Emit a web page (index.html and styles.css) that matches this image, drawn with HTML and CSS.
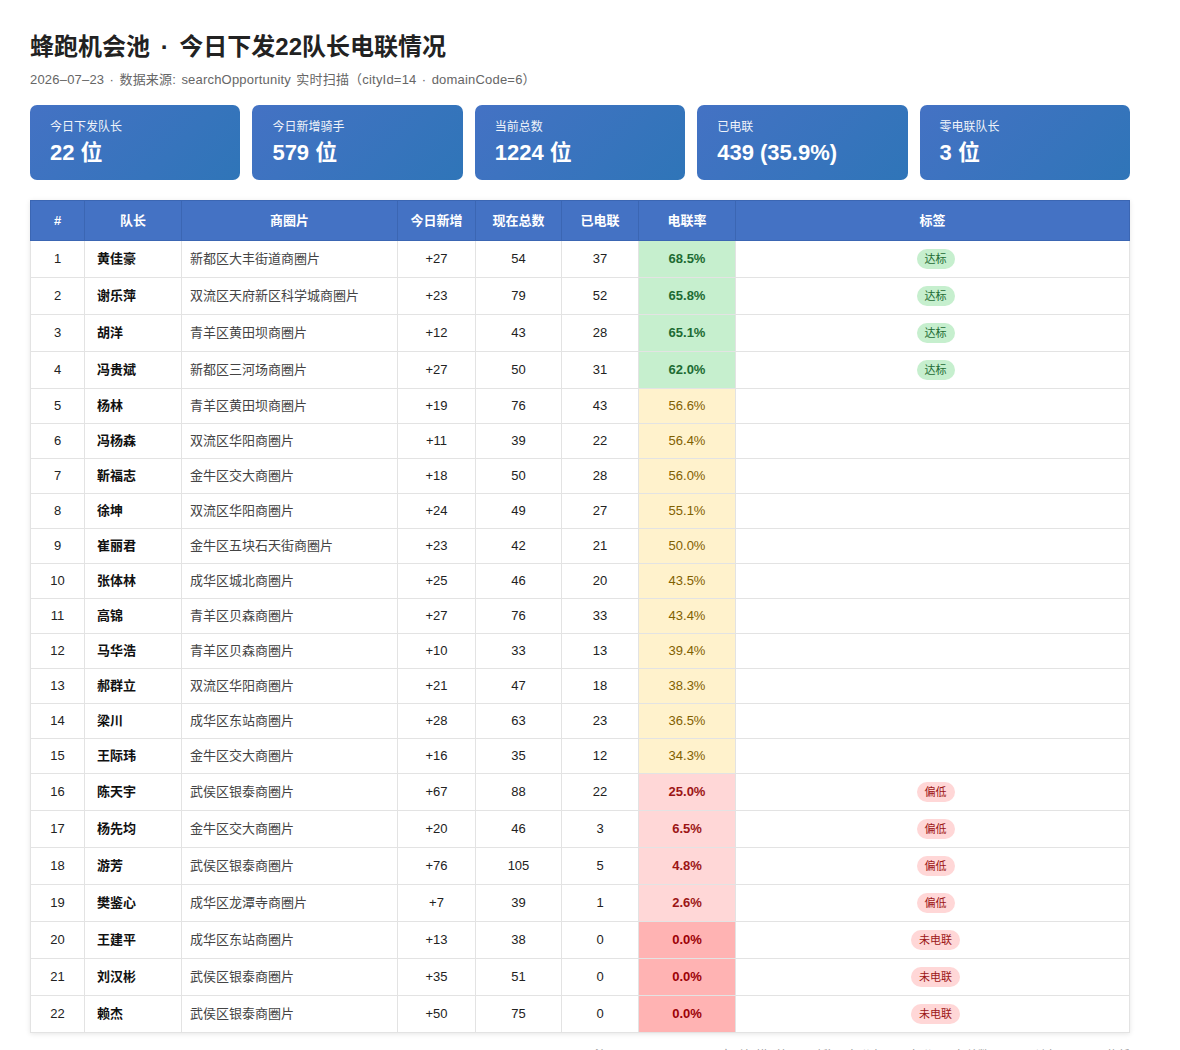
FILE: index.html
```html
<!DOCTYPE html>
<html lang="zh-CN">
<head>
<meta charset="utf-8">
<title>蜂跑机会池 · 今日下发22队长电联情况</title>
<link rel="stylesheet" href="styles.css">
</head>
<body>
<div class="page">
  <h1 class="title">蜂跑机会池 · 今日下发22队长电联情况</h1>
  <p class="subtitle">2026–07–23 · 数据来源: searchOpportunity 实时扫描（cityId=14 · domainCode=6）</p>

  <div class="cards">
    <div class="card"><div class="card-label">今日下发队长</div><div class="card-value">22 位</div></div>
    <div class="card"><div class="card-label">今日新增骑手</div><div class="card-value">579 位</div></div>
    <div class="card"><div class="card-label">当前总数</div><div class="card-value">1224 位</div></div>
    <div class="card"><div class="card-label">已电联</div><div class="card-value">439 (35.9%)</div></div>
    <div class="card"><div class="card-label">零电联队长</div><div class="card-value">3 位</div></div>
  </div>

  <table class="grid">
    <colgroup>
      <col class="c-idx"><col class="c-name"><col class="c-area"><col class="c-new"><col class="c-total"><col class="c-called"><col class="c-rate"><col class="c-tag">
    </colgroup>
    <thead>
      <tr><th>#</th><th>队长</th><th>商圈片</th><th>今日新增</th><th>现在总数</th><th>已电联</th><th>电联率</th><th>标签</th></tr>
    </thead>
    <tbody>
      <tr><td class="idx">1</td><td class="name">黄佳豪</td><td class="area">新都区大丰街道商圈片</td><td class="num">+27</td><td class="num">54</td><td class="num">37</td><td class="rate good">68.5%</td><td class="tag"><span class="badge ok">达标</span></td></tr>
      <tr><td class="idx">2</td><td class="name">谢乐萍</td><td class="area">双流区天府新区科学城商圈片</td><td class="num">+23</td><td class="num">79</td><td class="num">52</td><td class="rate good">65.8%</td><td class="tag"><span class="badge ok">达标</span></td></tr>
      <tr><td class="idx">3</td><td class="name">胡洋</td><td class="area">青羊区黄田坝商圈片</td><td class="num">+12</td><td class="num">43</td><td class="num">28</td><td class="rate good">65.1%</td><td class="tag"><span class="badge ok">达标</span></td></tr>
      <tr><td class="idx">4</td><td class="name">冯贵斌</td><td class="area">新都区三河场商圈片</td><td class="num">+27</td><td class="num">50</td><td class="num">31</td><td class="rate good">62.0%</td><td class="tag"><span class="badge ok">达标</span></td></tr>
      <tr><td class="idx">5</td><td class="name">杨林</td><td class="area">青羊区黄田坝商圈片</td><td class="num">+19</td><td class="num">76</td><td class="num">43</td><td class="rate mid">56.6%</td><td class="tag"></td></tr>
      <tr><td class="idx">6</td><td class="name">冯杨森</td><td class="area">双流区华阳商圈片</td><td class="num">+11</td><td class="num">39</td><td class="num">22</td><td class="rate mid">56.4%</td><td class="tag"></td></tr>
      <tr><td class="idx">7</td><td class="name">靳福志</td><td class="area">金牛区交大商圈片</td><td class="num">+18</td><td class="num">50</td><td class="num">28</td><td class="rate mid">56.0%</td><td class="tag"></td></tr>
      <tr><td class="idx">8</td><td class="name">徐坤</td><td class="area">双流区华阳商圈片</td><td class="num">+24</td><td class="num">49</td><td class="num">27</td><td class="rate mid">55.1%</td><td class="tag"></td></tr>
      <tr><td class="idx">9</td><td class="name">崔丽君</td><td class="area">金牛区五块石天街商圈片</td><td class="num">+23</td><td class="num">42</td><td class="num">21</td><td class="rate mid">50.0%</td><td class="tag"></td></tr>
      <tr><td class="idx">10</td><td class="name">张体林</td><td class="area">成华区城北商圈片</td><td class="num">+25</td><td class="num">46</td><td class="num">20</td><td class="rate mid">43.5%</td><td class="tag"></td></tr>
      <tr><td class="idx">11</td><td class="name">高锦</td><td class="area">青羊区贝森商圈片</td><td class="num">+27</td><td class="num">76</td><td class="num">33</td><td class="rate mid">43.4%</td><td class="tag"></td></tr>
      <tr><td class="idx">12</td><td class="name">马华浩</td><td class="area">青羊区贝森商圈片</td><td class="num">+10</td><td class="num">33</td><td class="num">13</td><td class="rate mid">39.4%</td><td class="tag"></td></tr>
      <tr><td class="idx">13</td><td class="name">郝群立</td><td class="area">双流区华阳商圈片</td><td class="num">+21</td><td class="num">47</td><td class="num">18</td><td class="rate mid">38.3%</td><td class="tag"></td></tr>
      <tr><td class="idx">14</td><td class="name">梁川</td><td class="area">成华区东站商圈片</td><td class="num">+28</td><td class="num">63</td><td class="num">23</td><td class="rate mid">36.5%</td><td class="tag"></td></tr>
      <tr><td class="idx">15</td><td class="name">王际玮</td><td class="area">金牛区交大商圈片</td><td class="num">+16</td><td class="num">35</td><td class="num">12</td><td class="rate mid">34.3%</td><td class="tag"></td></tr>
      <tr><td class="idx">16</td><td class="name">陈天宇</td><td class="area">武侯区银泰商圈片</td><td class="num">+67</td><td class="num">88</td><td class="num">22</td><td class="rate low">25.0%</td><td class="tag"><span class="badge bad">偏低</span></td></tr>
      <tr><td class="idx">17</td><td class="name">杨先均</td><td class="area">金牛区交大商圈片</td><td class="num">+20</td><td class="num">46</td><td class="num">3</td><td class="rate low">6.5%</td><td class="tag"><span class="badge bad">偏低</span></td></tr>
      <tr><td class="idx">18</td><td class="name">游芳</td><td class="area">武侯区银泰商圈片</td><td class="num">+76</td><td class="num">105</td><td class="num">5</td><td class="rate low">4.8%</td><td class="tag"><span class="badge bad">偏低</span></td></tr>
      <tr><td class="idx">19</td><td class="name">樊鉴心</td><td class="area">成华区龙潭寺商圈片</td><td class="num">+7</td><td class="num">39</td><td class="num">1</td><td class="rate low">2.6%</td><td class="tag"><span class="badge bad">偏低</span></td></tr>
      <tr><td class="idx">20</td><td class="name">王建平</td><td class="area">成华区东站商圈片</td><td class="num">+13</td><td class="num">38</td><td class="num">0</td><td class="rate zero">0.0%</td><td class="tag"><span class="badge bad">未电联</span></td></tr>
      <tr><td class="idx">21</td><td class="name">刘汉彬</td><td class="area">武侯区银泰商圈片</td><td class="num">+35</td><td class="num">51</td><td class="num">0</td><td class="rate zero">0.0%</td><td class="tag"><span class="badge bad">未电联</span></td></tr>
      <tr><td class="idx">22</td><td class="name">赖杰</td><td class="area">武侯区银泰商圈片</td><td class="num">+50</td><td class="num">75</td><td class="num">0</td><td class="rate zero">0.0%</td><td class="tag"><span class="badge bad">未电联</span></td></tr>
    </tbody>
  </table>

  <p class="footnote">注：searchOpportunity 实时扫描（每日更新）；电联率 = 已电联 / 现在总数，≥60% 达标，&lt;30% 偏低</p>
</div>
</body>
</html>
```

FILE: styles.css
```css
* { box-sizing: border-box; }

html, body {
  margin: 0;
  padding: 0;
  background: #ffffff;
}

body {
  font-family: "Liberation Sans", "Noto Sans CJK SC", sans-serif;
  color: #222222;
}

.page {
  padding: 30px 30px 20px 30px;
  width: 1160px;
}

.title {
  margin: 0;
  font-size: 24px;
  line-height: 33px;
  font-weight: 700;
  color: #222222;
  word-spacing: 4px;
}

.subtitle {
  margin: 7px 0 0 0;
  font-size: 13px;
  line-height: 20px;
  color: #666666;
  letter-spacing: 0.2px;
  word-spacing: 1.5px;
}

.cards {
  margin-top: 15px;
  display: grid;
  grid-template-columns: repeat(5, 1fr);
  gap: 12px;
}

.card {
  height: 75px;
  border-radius: 7px;
  background: linear-gradient(135deg, #4472c4 0%, #2f75b8 100%);
  color: #ffffff;
  padding: 14px 20px 11px 20px;
  display: flex;
  flex-direction: column;
  gap: 3px;
}

.card-label {
  font-size: 12px;
  line-height: 16px;
  opacity: 0.92;
}

.card-value {
  font-size: 22px;
  line-height: 30px;
  font-weight: 700;
}

.grid {
  margin-top: 20px;
  width: 1099px;
  border-collapse: collapse;
  table-layout: fixed;
  font-size: 13px;
  box-shadow: 0 1px 5px rgba(0, 0, 0, 0.10);
}

.c-idx { width: 54px; }
.c-name { width: 97px; }
.c-area { width: 216px; }
.c-new { width: 78px; }
.c-total { width: 86px; }
.c-called { width: 77px; }
.c-rate { width: 97px; }
.c-tag { width: 394px; }

.grid th {
  background: #4472c4;
  color: #ffffff;
  font-weight: 700;
  font-size: 13px;
  line-height: 19px;
  height: 40px;
  padding: 0 8px;
  text-align: center;
  border: 1px solid #3b66b3;
}

.grid td {
  border: 1px solid #e3e3e3;
  padding: 8px 8px;
  line-height: 18px;
  height: 35px;
  text-align: center;
  color: #222222;
  white-space: nowrap;
}

.grid td.name {
  text-align: left;
  padding-left: 12px;
  font-weight: 700;
  color: #111111;
}

.grid td.area {
  text-align: left;
  padding-left: 8px;
  color: #444444;
}

.grid td.rate.good {
  background: #c6efce;
  color: #1d6b33;
  font-weight: 700;
}

.grid td.rate.mid {
  background: #fff2cc;
  color: #7f6000;
}

.grid td.rate.low {
  background: #ffd7d7;
  color: #9c1515;
  font-weight: 700;
}

.grid td.rate.zero {
  background: #ffb3b3;
  color: #9c0006;
  font-weight: 700;
}

.grid td.tag {
  padding: 8px 8px 8px 14px;
}

.badge {
  display: inline-block;
  vertical-align: middle;
  font-size: 11px;
  line-height: 20px;
  height: 20px;
  padding: 0 8px;
  border-radius: 10px;
}

.badge.ok {
  background: #c6efce;
  color: #1d6b33;
}

.badge.bad {
  background: #ffd7d7;
  color: #9c1515;
}

.footnote {
  margin: 14px 0 0 0;
  font-size: 12px;
  line-height: 18px;
  color: #999999;
  text-align: right;
}
```
